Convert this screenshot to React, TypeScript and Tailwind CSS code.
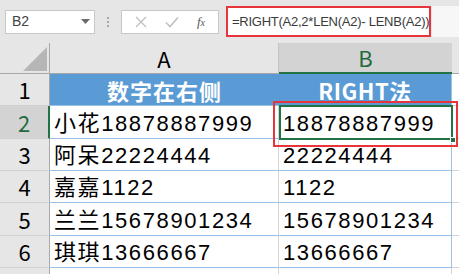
import React from "react";

const cjk = { fontFamily: '"Noto Sans CJK SC", "Noto Sans", sans-serif' };
const cell = { fontFamily: '"Liberation Sans", "Noto Sans CJK SC", sans-serif' };

const rows: { n: number; a: string; b: string; h: string }[] = [
	{ n: 2, a: "小花18878887999", b: "18878887999", h: "h-[33px]" },
	{ n: 3, a: "阿呆22224444", b: "22224444", h: "h-[32px]" },
	{ n: 4, a: "嘉嘉1122", b: "1122", h: "h-[32px]" },
	{ n: 5, a: "兰兰15678901234", b: "15678901234", h: "h-[33px]" },
	{ n: 6, a: "琪琪13666667", b: "13666667", h: "h-[32px]" },
];

export default function App() {
	return (
		<div className="relative w-[459px] h-[274px] overflow-hidden bg-[#e6e6e6]" style={{ fontFamily: '"Liberation Sans", Arial, sans-serif' }}>
			{/* formula bar */}
			<div className="flex items-center h-[43px] pl-[5px]">
				<div className="flex items-center justify-between w-[90px] h-[24px] bg-white border border-[#c8c8c8] pl-[6px] pr-[4px] text-[14px] text-[#444]">
					<span>B2</span>
					<svg width="9" height="5" viewBox="0 0 9 5"><path d="M0 0h9L4.5 5z" fill="#6b6b6b" /></svg>
				</div>
				<div className="flex flex-col gap-[2px] ml-[12px] mr-[12px]">
					<span className="w-[2px] h-[2px] bg-[#a8a8a8]" />
					<span className="w-[2px] h-[2px] bg-[#a8a8a8]" />
					<span className="w-[2px] h-[2px] bg-[#a8a8a8]" />
				</div>
				<div className="flex items-center justify-around w-[98px] h-[24px] bg-white border border-[#c8c8c8] px-[4px]">
					<svg width="12" height="12" viewBox="0 0 12 12"><path d="M1 1l10 10M11 1L1 11" stroke="#c0c0c0" strokeWidth="1.4" /></svg>
					<svg width="14" height="12" viewBox="0 0 14 12"><path d="M1 6.5l4 4L13 1.5" stroke="#c0c0c0" strokeWidth="1.6" fill="none" /></svg>
					<span className="text-[13px] italic text-[#555]" style={{ fontFamily: '"Liberation Serif", serif' }}>f<span className="text-[10px]">x</span></span>
				</div>
				<div className="flex items-center ml-[7px] w-[205px] h-[31px] overflow-hidden bg-white border-[2.5px] border-[#e8353b] pl-[4px] text-[13px] text-[#3a3a3a] whitespace-nowrap tracking-[-0.25px]">
					=RIGHT(A2,2*LEN(A2)- LENB(A2))
				</div>
				<div className="flex-1 h-[31px] bg-[#f7f7f7] ml-[1px]" />
			</div>

			{/* grid */}
			<div className="grid grid-cols-[50px_229px_173px_7px]">
				{/* column header */}
				<div className="relative h-[31px] border-r border-b border-[#a8a8a8] bg-[#e6e6e6]">
					<svg className="absolute left-[23px] top-[4px]" width="25" height="25" viewBox="0 0 25 25"><path d="M24 0V24H0z" fill="#b6b6b6" /></svg>
				</div>
				<div className="flex items-center justify-center h-[31px] border-r border-b border-[#c4c4c4] border-b-[#a8a8a8] bg-[#e6e6e6] text-[22px] text-black" style={cjk}>A</div>
				<div className="flex items-center justify-center h-[31px] border-b-2 border-[#217346] bg-[#d3d3d3] text-[22px] text-[#1f6b40]" style={cjk}>B</div>
				<div className="h-[31px] border-b border-[#a8a8a8] bg-[#e6e6e6]" />

				{/* row 1 */}
				<div className="flex items-center justify-center h-[32px] border-r border-b border-r-[#a8a8a8] border-b-[#d0d0d0] bg-[#e6e6e6] text-[22px] text-black" style={cjk}>1</div>
				<div className="flex items-center justify-center h-[32px] bg-[#5b9bd5] border-b border-[#9bc2e6] text-[22px] font-bold text-white pt-[1px] tracking-[1px]" style={cjk}>数字在右侧</div>
				<div className="flex items-center justify-center h-[32px] bg-[#5b9bd5] border-b border-r border-[#9bc2e6] text-[22px] font-bold text-white pt-[1px] tracking-[0.5px]" style={cjk}>RIGHT法</div>
				<div className="h-[32px] bg-white border-b border-[#d4d4d4]" />

				{rows.map((r) => (
					<React.Fragment key={r.n}>
						<div
							className={
								r.n === 2
									? `flex items-center justify-center ${r.h} border-r-2 border-b border-r-[#217346] border-b-[#d0d0d0] bg-[#d3d3d3] text-[22px] text-[#1f6b40]`
									: `flex items-center justify-center ${r.h} border-r border-b border-r-[#a8a8a8] border-b-[#d0d0d0] bg-[#e6e6e6] text-[22px] text-black`
							}
							style={cjk}
						>
							{r.n}
						</div>
						<div className={`flex items-center ${r.h} bg-white border-b border-r border-b-[#9bc2e6] border-r-[#d4d4d4] pl-[4px] pt-[2px] text-[22px] text-black whitespace-nowrap tracking-[1.6px]`} style={cell}>{r.a}</div>
						<div className={`flex items-center ${r.h} bg-white border-b border-r border-[#9bc2e6] pl-[4px] pt-[2px] text-[22px] text-black whitespace-nowrap tracking-[1.6px]`} style={cell}>{r.b}</div>
						<div className={`${r.h} bg-white border-b border-[#d4d4d4]`} />
					</React.Fragment>
				))}

				<div className="h-[20px] border-r border-[#a8a8a8] bg-[#e6e6e6]" />
				<div className="h-[20px] bg-white border-r border-[#d4d4d4]" />
				<div className="h-[20px] bg-white border-r border-[#d4d4d4]" />
				<div className="h-[20px] bg-white" />
			</div>

			{/* selection of B2 */}
			<div className="absolute left-[279px] top-[105px] w-[174px] h-[35px] border-2 border-[#217346]" />
			<div className="absolute left-[450px] top-[137px] w-[6px] h-[6px] bg-[#217346] border border-white" />
			{/* red highlight */}
			<div className="absolute left-[273px] top-[101px] w-[185px] h-[46px] border-[2.5px] border-[#e8353b]" />
		</div>
	);
}
